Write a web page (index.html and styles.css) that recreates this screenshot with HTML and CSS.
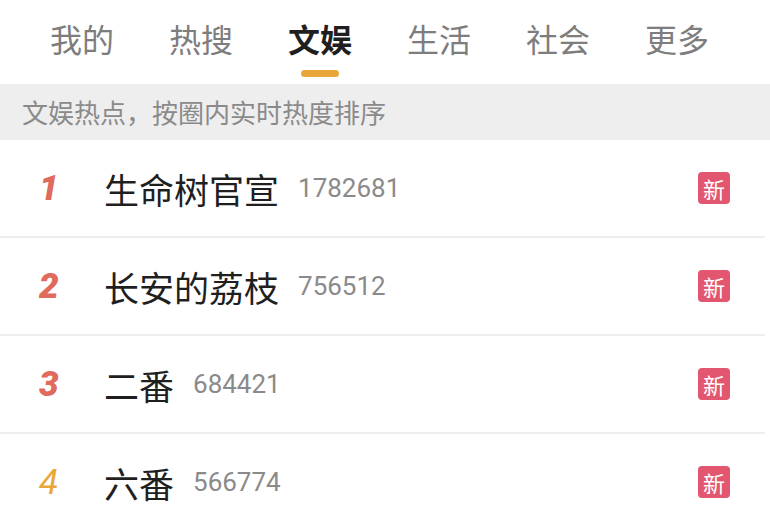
FILE: index.html
```html
<!DOCTYPE html>
<html lang="zh-CN">
<head>
    <meta charset="UTF-8">
    <meta name="viewport" content="width=device-width, initial-scale=1.0">
    <title>文娱热搜</title>
    <link rel="stylesheet" href="styles.css">
</head>
<body>
    <nav class="tabs">
        <a class="tab">我的</a>
        <a class="tab">热搜</a>
        <a class="tab active">文娱</a>
        <a class="tab">生活</a>
        <a class="tab">社会</a>
        <a class="tab">更多</a>
    </nav>
    <div class="tip">文娱热点，按圈内实时热度排序</div>
    <ul class="list">
        <li class="row">
            <span class="rank top">1</span>
            <span class="title">生命树官宣</span>
            <span class="count">1782681</span>
            <span class="badge">新</span>
        </li>
        <li class="row">
            <span class="rank top">2</span>
            <span class="title">长安的荔枝</span>
            <span class="count">756512</span>
            <span class="badge">新</span>
        </li>
        <li class="row">
            <span class="rank top">3</span>
            <span class="title">二番</span>
            <span class="count">684421</span>
            <span class="badge">新</span>
        </li>
        <li class="row">
            <span class="rank">4</span>
            <span class="title">六番</span>
            <span class="count">566774</span>
            <span class="badge">新</span>
        </li>
    </ul>
</body>
</html>
```

FILE: styles.css
```css
:root {
    --text: #1f1f1f;
    --grey: #8a8a8a;
    --tab: #7d7d7d;
    --accent: #e9a73a;
    --hot: #e06a5c;
    --line: #eeeeee;
    --badge: #e2566f;
}
* { box-sizing: border-box; }
body {
    margin: 0;
    background: #fff;
    font-family: "Noto Sans CJK SC", "Noto Sans", sans-serif;
    color: var(--text);
    overflow: hidden;
}
.tabs {
    display: flex;
    height: 84px;
    padding: 14px 0 0 50px;
    gap: 55px;
}
.tab {
    position: relative;
    font-size: 32px;
    line-height: 48px;
    height: 48px;
    color: var(--tab);
    text-decoration: none;
}
.tab.active {
    color: var(--text);
    font-weight: 700;
}
.tab.active::after {
    content: '';
    position: absolute;
    left: 13px;
    top: 56px;
    width: 38px;
    height: 7px;
    border-radius: 4px;
    background: var(--accent);
}
.tip {
    height: 56px;
    background: #eeeeee;
    color: var(--grey);
    font-size: 26px;
    line-height: 56px;
    padding-left: 22px;
}
.list {
    list-style: none;
    margin: 0;
    padding: 0;
    width: 765px;
}
.row {
    display: flex;
    align-items: center;
    height: 98px;
    border-bottom: 2px solid var(--line);
    padding: 0 35px 0 38px;
}
.rank {
    width: 66px;
    font-family: "Roboto", "Liberation Sans", sans-serif;
    font-style: italic;
    font-size: 35px;
    color: var(--accent);
    padding-left: 1px;
}
.rank.top {
    color: var(--hot);
    font-weight: 900;
}
.title {
    font-size: 35px;
    color: var(--text);
}
.count {
    margin-left: 19px;
    font-family: "Roboto", "Noto Sans", sans-serif;
    font-size: 26px;
    color: var(--grey);
    flex: 1;
}
.badge {
    width: 32px;
    height: 32px;
    border-radius: 4px;
    background: var(--badge);
    color: #fff;
    font-size: 22px;
    line-height: 32px;
    text-align: center;
}
```
